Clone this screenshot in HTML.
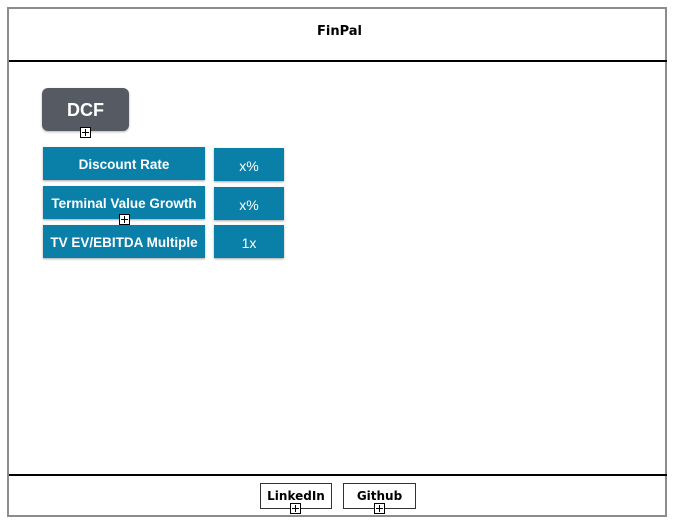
<!DOCTYPE html>
<html><head><style>
body{margin:0;width:679px;height:525px;background:#fff;position:relative;overflow:hidden;font-family:"DejaVu Sans",sans-serif}
.a{position:absolute}
.frame{left:7px;top:7px;width:656px;height:506px;border:2px solid #8a8d90}
.line{left:9px;width:658px;height:2px;background:#000}
.title{left:0;width:679px;top:24px;text-align:center;font-weight:bold;font-size:13px}
.dcf{left:42px;top:88px;width:87px;height:43px;background:#565b63;border-radius:6px;color:#fff;font:bold 18px "Liberation Sans",sans-serif;text-align:center;line-height:45px;box-shadow:0 1px 2px rgba(0,0,0,.3)}
.b{background:#0a7fa8;color:#fff;font:bold 13.5px "Liberation Sans",sans-serif;text-align:center;height:33px;line-height:36px;box-shadow:0 1px 2px rgba(0,0,0,.35);white-space:nowrap}
.v{font-weight:normal;font-size:14px}
.plus{width:9px;height:9px;border:1px solid #000;background:#fff}
.plus:before{content:"";position:absolute;left:1px;top:4px;width:7px;height:1px;background:#000}
.plus:after{content:"";position:absolute;left:4px;top:1px;width:1px;height:7px;background:#000}
.f{border:1px solid #333;height:24px;line-height:25px;text-align:center;font-weight:bold;font-size:12px}
</style></head><body>
<div class="a frame"></div>
<div class="a title">FinPal</div>
<div class="a line" style="top:60px"></div>
<div class="a line" style="top:474px"></div>
<div class="a dcf">DCF</div>
<div class="a plus" style="left:80px;top:127px"></div>
<div class="a b" style="left:43px;top:147px;width:162px">Discount Rate</div>
<div class="a b v" style="left:214px;top:148px;width:70px">x%</div>
<div class="a b" style="left:43px;top:186px;width:162px">Terminal Value Growth</div>
<div class="a b v" style="left:214px;top:187px;width:70px">x%</div>
<div class="a b" style="left:43px;top:225px;width:162px">TV EV/EBITDA Multiple</div>
<div class="a b v" style="left:214px;top:225px;width:70px">1x</div>
<div class="a plus" style="left:119px;top:214px"></div>
<div class="a f" style="left:260px;top:483px;width:70px">LinkedIn</div>
<div class="a f" style="left:343px;top:483px;width:71px">Github</div>
<div class="a plus" style="left:290px;top:503px"></div>
<div class="a plus" style="left:374px;top:503px"></div>
</body></html>
